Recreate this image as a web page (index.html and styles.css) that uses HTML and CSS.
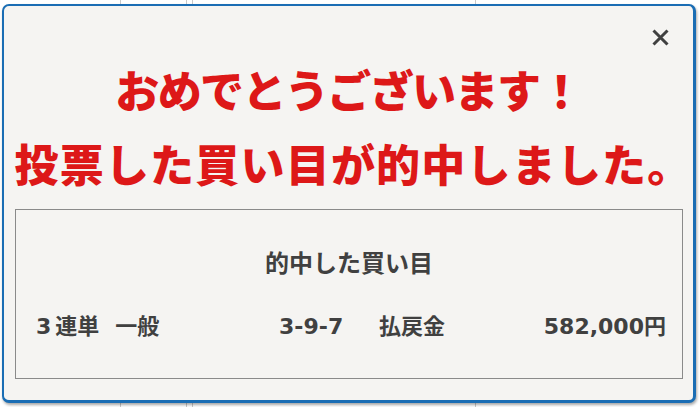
FILE: index.html
```html
<!DOCTYPE html>
<html lang="ja">

<head>
    <meta charset="UTF-8">
    <meta name="viewport" content="width=device-width, initial-scale=1.0">
    <title>的中</title>
    <link rel="stylesheet" href="styles.css">
</head>

<body>
    <!-- page behind the popup -->
    <div class="page">
        <div class="page-row">
            <div class="cell c1"></div>
            <div class="cell c2"></div>
            <div class="cell c3"></div>
            <div class="cell c4"></div>
            <div class="cell c5"></div>
        </div>
    </div>

    <!-- Popup -->
    <div class="popup">
        <div class="popup-top">
            <span class="close">
                <svg width="17" height="17" viewBox="0 0 17 17">
                    <path d="M1.5 1.5 L15.5 15.5 M15.5 1.5 L1.5 15.5" stroke="#404040" stroke-width="3" fill="none"/>
                </svg>
            </span>
        </div>
        <h1 class="message">
            <span class="line-1">おめでとうございます！</span><br>
            <span class="line-2">投票した買い目が的中しました。</span>
        </h1>

        <div class="hit-box">
            <h2>的中した買い目</h2>
            <div class="hit-row">
                <div class="bet-type"><span class="num">3</span><span>連単</span><span class="kind">一般</span></div>
                <div class="numbers">3-9-7</div>
                <div class="label">払戻金</div>
                <div class="amount">582,000円</div>
            </div>
        </div>
    </div>
</body>

</html>
```

FILE: styles.css
```css
body {
    margin: 0;
    padding: 0;
    width: 700px;
    height: 407px;
    overflow: hidden;
    background-color: #fff;
    font-family: "Noto Sans CJK JP", "Noto Sans", sans-serif;
}

/* background page */
.page {
    height: 407px;
}

.page-row {
    display: flex;
    height: 407px;
}

.cell {
    border-right: 1px solid #c9c9c9;
    box-sizing: border-box;
}

.c1 { width: 121px; }
.c2 { width: 66px; }
.c3 { width: 6px; }
.c4 { width: 283px; }
.c5 { flex: 1; border-right: none; }

/* Popup */
.popup {
    position: absolute;
    top: 4px;
    left: 2px;
    width: 694px;
    height: 399px;
    box-sizing: border-box;
    background-color: #f5f4f2;
    border: 2px solid #1a6db4;
    border-right-width: 3px;
    border-bottom-width: 3px;
    border-radius: 7px;
    box-shadow: 1px 2px 3px rgba(0, 0, 0, 0.35);
}

.popup-top {
    display: flex;
    justify-content: flex-end;
    padding: 21px 24px 0 0;
    height: 17px;
}

.close {
    display: block;
    width: 17px;
    height: 17px;
    cursor: pointer;
}

.message {
    margin: 8px 0 0;
    text-align: center;
    color: #dd1818;
    font-size: 44px;
    font-weight: 900;
    line-height: 74px;
}

.line-1 {
    letter-spacing: -1.6px;
}

.line-2 {
    letter-spacing: 1.2px;
    margin-left: 10px;
}

.hit-box {
    margin: 9px 10px 0 11px;
    height: 170px;
    box-sizing: border-box;
    border: 1px solid #8a8a8a;
    color: #404040;
}

.hit-box h2 {
    margin: 32px 0 0;
    text-align: center;
    font-size: 24px;
    font-weight: 700;
    line-height: 40px;
}

.hit-row {
    display: flex;
    align-items: center;
    margin-top: 30px;
    padding: 0 16px 0 20px;
    font-family: "DejaVu Sans", "Noto Sans CJK JP", sans-serif;
    font-size: 22px;
    font-weight: 700;
    line-height: 30px;
}

.bet-type {
    width: 243px;
}

.num {
    margin-right: 4px;
}

.kind {
    margin-left: 16px;
}

.numbers {
    width: 100px;
}

.label {
    width: 100px;
}

.amount {
    flex: 1;
    text-align: right;
}
```
